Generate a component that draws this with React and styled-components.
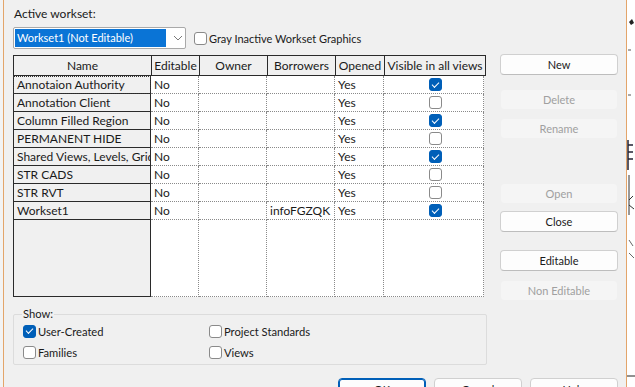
import React from "react";
import styled, { createGlobalStyle } from "styled-components";

const GlobalStyle = createGlobalStyle`
  html, body {
    margin: 0;
    padding: 0;
    background: #f0f0f0;
  }
  * {
    box-sizing: border-box;
  }
`;

const rows = [
  { name: "Annotaion Authority", borrowers: "", visible: true, focus: true },
  { name: "Annotation Client", borrowers: "", visible: false },
  { name: "Column Filled Region", borrowers: "", visible: true },
  { name: "PERMANENT HIDE", borrowers: "", visible: false },
  { name: "Shared Views, Levels, Grids", borrowers: "", visible: true },
  { name: "STR CADS", borrowers: "", visible: false },
  { name: "STR RVT", borrowers: "", visible: false },
  { name: "Workset1", borrowers: "infoFGZQK", visible: true },
];

const COLS = "138px 48px 68px 68px 49px 100px";

export default function App() {
  return (
    <Screen>
      <GlobalStyle />
      <LeftEdge />
      <Dialog>
        <Label>Active workset:</Label>
        <TopRow>
          <Combo>
            <ComboValue>Workset1 (Not Editable)</ComboValue>
            <Chevron viewBox="0 0 10 6">
              <path d="M1 1 L5 5 L9 1" fill="none" stroke="#7a7a7a" strokeWidth="1" />
            </Chevron>
          </Combo>
          <CheckLine>
            <Box $checked={false} />
            <span>Gray Inactive Workset Graphics</span>
          </CheckLine>
        </TopRow>

        <MainRow>
          <Grid>
            <HeaderRow>
              <Head>Name</Head>
              <Head>Editable</Head>
              <Head>Owner</Head>
              <Head>Borrowers</Head>
              <Head>Opened</Head>
              <Head $last>Visible in all views</Head>
            </HeaderRow>
            {rows.map((r) => (
              <BodyRow key={r.name}>
                <NameCell $focus={r.focus}>{r.name}</NameCell>
                <Cell>No</Cell>
                <Cell />
                <Cell>{r.borrowers}</Cell>
                <Cell>Yes</Cell>
                <Cell $center>
                  <Box $checked={r.visible} />
                </Cell>
              </BodyRow>
            ))}
            <FillerRow>
              <NameFill />
              <Fill />
              <Fill />
              <Fill />
              <Fill />
              <Fill />
            </FillerRow>
          </Grid>

          <Buttons>
            <Button>New</Button>
            <Gap $h={14} />
            <Button disabled>Delete</Button>
            <Gap $h={8} />
            <Button disabled>Rename</Button>
            <Gap $h={44} />
            <Button disabled>Open</Button>
            <Gap $h={7} />
            <Button>Close</Button>
            <Gap $h={18} />
            <Button>Editable</Button>
            <Gap $h={9} />
            <Button disabled>Non Editable</Button>
          </Buttons>
        </MainRow>

        <ShowGroup>
          <GroupLabel>Show:</GroupLabel>
          <ShowGrid>
            <CheckLine>
              <Box $checked />
              <span>User-Created</span>
            </CheckLine>
            <CheckLine>
              <Box $checked={false} />
              <span>Project Standards</span>
            </CheckLine>
            <CheckLine>
              <Box $checked={false} />
              <span>Families</span>
            </CheckLine>
            <CheckLine>
              <Box $checked={false} />
              <span>Views</span>
            </CheckLine>
          </ShowGrid>
        </ShowGroup>

        <Footer>
          <FootButton $primary>OK</FootButton>
          <FootButton>Cancel</FootButton>
          <FootButton>Help</FootButton>
        </Footer>
      </Dialog>
      <RightEdge>
        <svg width="9" height="387" viewBox="0 0 9 387">
          <path d="M2 22 l3 -3 l2 4 l-3 2 z" fill="#222" />
          <path d="M1 50 h3 M1 95 h3" stroke="#555" strokeWidth="1" />
          <path d="M1 140 v30 M1 145 h5 M1 152 h5 M1 159 h5" stroke="#223" strokeWidth="1.5" />
          <path d="M2 175 v40 M2 200 l4 -4 M2 205 l5 4" stroke="#333" strokeWidth="1" fill="none" />
          <path d="M2 240 l4 6 M2 253 l5 5" stroke="#666" strokeWidth="1" />
          <path d="M0 376 h9" stroke="#222" strokeWidth="1" />
        </svg>
      </RightEdge>
    </Screen>
  );
}

const Screen = styled.div`
  width: 635px;
  height: 387px;
  overflow: hidden;
  display: flex;
  background: #f0f0f0;
  font-family: Lato, "Noto Sans", sans-serif;
  font-size: 12px;
  color: #1a1a1a;
`;

const LeftEdge = styled.div`
  width: 4px;
  flex: none;
  border-right: 1px solid #e3a56a;
  background: #f3f3f3;
`;

const RightEdge = styled.div`
  width: 9px;
  flex: none;
  border-left: 1px solid #e3a56a;
  background: #ffffff;
`;

const Dialog = styled.div`
  flex: 1;
  padding: 5px 0 0 9px;
  display: flex;
  flex-direction: column;
`;

const Label = styled.div`
  height: 18px;
  line-height: 18px;
  padding-left: 1px;
`;

const TopRow = styled.div`
  margin-top: 4px;
  display: flex;
  align-items: center;
  gap: 8px;
  font-size: 11px;
`;

const Combo = styled.div`
  width: 173px;
  height: 22px;
  background: #ffffff;
  border: 1px solid #a9a9a9;
  border-radius: 2px;
  padding: 1px;
  display: flex;
  align-items: center;
`;

const ComboValue = styled.div`
  width: 151px;
  height: 18px;
  line-height: 18px;
  background: #0a74d6;
  color: #ffffff;
  padding-left: 2px;
  white-space: nowrap;
`;

const Chevron = styled.svg`
  width: 10px;
  height: 6px;
  margin-left: 7px;
`;

const CheckLine = styled.label`
  display: flex;
  align-items: center;
  gap: 2px;
  white-space: nowrap;
  height: 14px;
`;

const Box = styled.span`
  display: inline-flex;
  align-items: center;
  justify-content: center;
  width: 13px;
  height: 13px;
  border-radius: 3px;
  flex: none;
  border: 1px solid ${(p) => (p.$checked ? "#005fb8" : "#8a8a8a")};
  background: ${(p) => (p.$checked ? "#005fb8" : "#ffffff")};
  &::after {
    content: "";
    display: ${(p) => (p.$checked ? "block" : "none")};
    width: 6px;
    height: 3px;
    border-left: 1.4px solid #ffffff;
    border-bottom: 1.4px solid #ffffff;
    transform: translate(0, -1px) rotate(-45deg);
  }
`;

const MainRow = styled.div`
  margin-top: 5px;
  display: flex;
  align-items: flex-start;
  gap: 14px;
`;

const Grid = styled.div`
  width: 473px;
  margin-top: 1px;
`;

const HeaderRow = styled.div`
  display: grid;
  grid-template-columns: ${COLS};
  border: 1px solid #2a2a2a;
  height: 21px;
`;

const Head = styled.div`
  text-align: center;
  line-height: 19px;
  white-space: nowrap;
  overflow: hidden;
  border-right: ${(p) => (p.$last ? "none" : "1px solid #2a2a2a")};
`;

const BodyRow = styled.div`
  display: grid;
  grid-template-columns: ${COLS};
  height: 18px;
`;

const NameCell = styled.div`
  background: #f0f0f0;
  border-left: 1px solid #2a2a2a;
  border-right: 1px solid #2a2a2a;
  border-bottom: 1px solid #2a2a2a;
  padding-left: 3px;
  line-height: 17px;
  white-space: nowrap;
  overflow: hidden;
  outline: ${(p) => (p.$focus ? "1px dotted #333" : "none")};
  outline-offset: -1px;
`;

const Cell = styled.div`
  background: #ffffff;
  border-right: 1px dotted #8a8a8a;
  border-bottom: 1px dotted #8a8a8a;
  padding-left: 3px;
  line-height: 17px;
  white-space: nowrap;
  overflow: hidden;
  display: flex;
  align-items: center;
  justify-content: ${(p) => (p.$center ? "center" : "flex-start")};
`;

const FillerRow = styled.div`
  display: grid;
  grid-template-columns: ${COLS};
  height: 77px;
`;

const NameFill = styled.div`
  background: #f0f0f0;
  border: 1px solid #2a2a2a;
  border-top: none;
`;

const Fill = styled.div`
  background: #ffffff;
  border-right: 1px dotted #8a8a8a;
  border-bottom: 1px dotted #8a8a8a;
`;

const Buttons = styled.div`
  display: flex;
  flex-direction: column;
  width: 118px;
  font-size: 11px;
`;

const Gap = styled.div`
  height: ${(p) => p.$h}px;
`;

const Button = styled.button`
  height: 21px;
  width: 118px;
  font: inherit;
  border-radius: 4px;
  background: #fdfdfd;
  border: 1px solid #d0d0d0;
  border-bottom-color: #bdbdbd;
  color: #1a1a1a;
  padding: 0;
  &:disabled {
    background: #f5f5f5;
    border-color: #f0f0f0;
    color: #a0a0a0;
  }
`;

const ShowGroup = styled.fieldset`
  margin: 6px 0 0 0;
  width: 474px;
  border: 1px solid #dcdcdc;
  border-radius: 2px;
  padding: 3px 0 5px 8px;
  min-width: 0;
  font-size: 11.2px;
`;

const GroupLabel = styled.legend`
  padding: 0 1px;
  height: 14px;
  line-height: 14px;
`;

const ShowGrid = styled.div`
  display: grid;
  grid-template-columns: 186px 1fr;
  row-gap: 7px;
  padding-left: 1px;
`;

const Footer = styled.div`
  margin-top: 13px;
  padding-left: 325px;
  display: flex;
  gap: 8px;
  font-size: 11px;
`;

const FootButton = styled.button`
  width: 88px;
  height: 23px;
  flex: none;
  font: inherit;
  background: #fdfdfd;
  border-radius: 4px;
  border: 1px solid ${(p) => (p.$primary ? "#005fb8" : "#d0d0d0")};
  box-shadow: ${(p) => (p.$primary ? "inset 0 0 0 1px #005fb8" : "none")};
  color: #1a1a1a;
`;
